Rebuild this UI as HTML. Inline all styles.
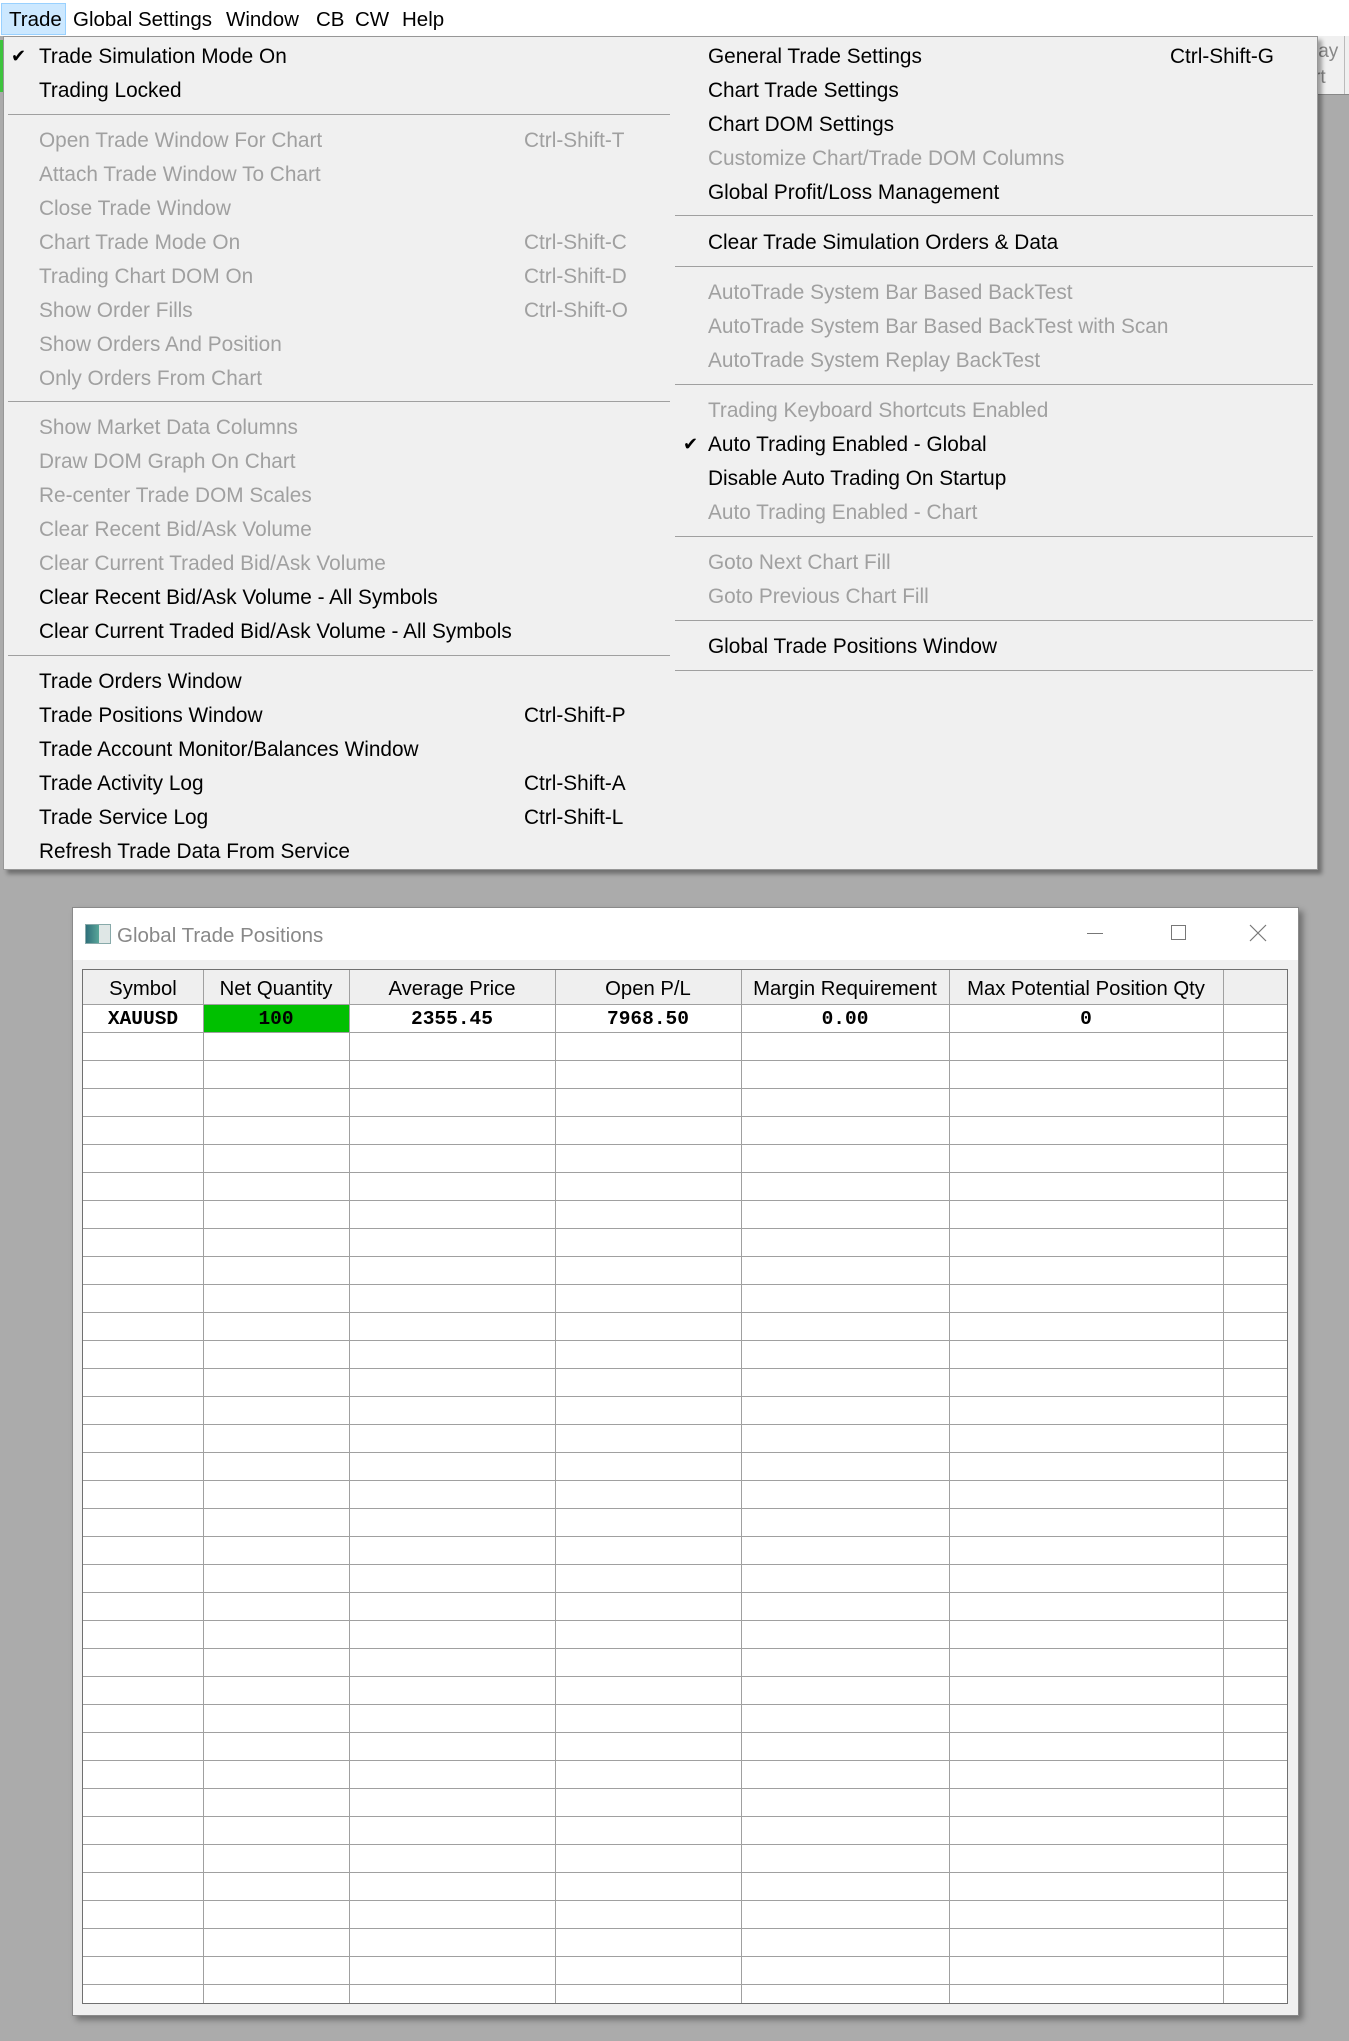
<!DOCTYPE html>
<html><head><meta charset="utf-8"><style>
*{margin:0;padding:0;box-sizing:border-box}
body{width:1349px;height:2041px;background:#ababab;position:relative;overflow:hidden;font-family:"Liberation Sans",sans-serif}
.bar{position:absolute;left:0;top:0;width:1349px;height:36px;background:#fff}
.mi{position:absolute;top:3px;height:32px;line-height:34px;font-size:20.5px;color:#000}
.menu{position:absolute;left:3px;top:36px;width:1315px;height:834px;background:#f0f0f0;border:1px solid #979797;box-shadow:4px 4px 4px rgba(0,0,0,.35)}
.it{position:absolute;height:34px;line-height:35px;font-size:20.8px;color:#000;white-space:nowrap}
.d{color:#a0a0a0}
.sep{position:absolute;height:1px;background:#a0a0a0}
.win{position:absolute;left:72px;top:907px;width:1227px;height:1109px;background:#f0f0f0;border:1px solid #8a8a8a;box-shadow:4px 4px 6px rgba(0,0,0,.35)}
.tb{position:absolute;left:0;top:0;width:100%;height:52px;background:#fff}
.grid{position:absolute;left:82px;top:969px;width:1206px;height:1035px;border:1px solid #707070;background:#fff}
.hd{position:absolute;left:0;top:0;width:100%;height:35px;background:#efefef;border-bottom:1px solid #a0a0a0}
.rows{position:absolute;left:0;top:35px;width:100%;bottom:0;background:repeating-linear-gradient(to bottom,transparent 0,transparent 27px,#a0a0a0 27px,#a0a0a0 28px)}
.vl{position:absolute;top:0;bottom:0;width:1px;background:#a0a0a0}
.h{position:absolute;top:0;height:35px;line-height:38px;font-size:20.3px;text-align:center;color:#000;white-space:nowrap}
.c{position:absolute;top:35px;height:27px;line-height:29px;font-family:"Liberation Mono",monospace;font-weight:bold;font-size:19.5px;text-align:center;color:#000}
</style></head><body>
<div class="bar">
<div style="position:absolute;left:1px;top:3px;width:65px;height:32px;background:#cce8ff;border:1px solid #99d1ff"></div>
<div class="mi" style="left:9px">Trade</div>
<div class="mi" style="left:73px">Global Settings</div>
<div class="mi" style="left:226px">Window</div>
<div class="mi" style="left:316px">CB</div>
<div class="mi" style="left:355px">CW</div>
<div class="mi" style="left:402px">Help</div>
</div>
<div style="position:absolute;left:0;top:40px;width:3px;height:52px;background:#3ec43e"></div>
<div style="position:absolute;left:1318px;top:36px;width:31px;height:59px;background:#f0f0f0;border-bottom:1px solid #888;font-size:19px;color:#888;line-height:26px;padding-top:3px;overflow:hidden"><div style="margin-left:-4px">lay</div><div style="margin-left:-4px">rt</div><div style="position:absolute;left:26px;top:0;width:1px;height:59px;background:#bbb"></div></div>

<div class="menu">
<div class="it" style="left:7px;top:2px;font-size:18px">✔</div>
<div class="it" style="left:35px;top:2px">Trade Simulation Mode On</div>
<div class="it" style="left:35px;top:36px">Trading Locked</div>
<div class="sep" style="left:4px;width:662px;top:77px"></div>
<div class="it d" style="left:35px;top:86px">Open Trade Window For Chart</div><div class="it d" style="left:520px;top:86px">Ctrl-Shift-T</div>
<div class="it d" style="left:35px;top:120px">Attach Trade Window To Chart</div>
<div class="it d" style="left:35px;top:154px">Close Trade Window</div>
<div class="it d" style="left:35px;top:188px">Chart Trade Mode On</div><div class="it d" style="left:520px;top:188px">Ctrl-Shift-C</div>
<div class="it d" style="left:35px;top:222px">Trading Chart DOM On</div><div class="it d" style="left:520px;top:222px">Ctrl-Shift-D</div>
<div class="it d" style="left:35px;top:256px">Show Order Fills</div><div class="it d" style="left:520px;top:256px">Ctrl-Shift-O</div>
<div class="it d" style="left:35px;top:290px">Show Orders And Position</div>
<div class="it d" style="left:35px;top:324px">Only Orders From Chart</div>
<div class="sep" style="left:4px;width:662px;top:364px"></div>
<div class="it d" style="left:35px;top:373px">Show Market Data Columns</div>
<div class="it d" style="left:35px;top:407px">Draw DOM Graph On Chart</div>
<div class="it d" style="left:35px;top:441px">Re-center Trade DOM Scales</div>
<div class="it d" style="left:35px;top:475px">Clear Recent Bid/Ask Volume</div>
<div class="it d" style="left:35px;top:509px">Clear Current Traded Bid/Ask Volume</div>
<div class="it" style="left:35px;top:543px">Clear Recent Bid/Ask Volume - All Symbols</div>
<div class="it" style="left:35px;top:577px">Clear Current Traded Bid/Ask Volume - All Symbols</div>
<div class="sep" style="left:4px;width:662px;top:618px"></div>
<div class="it" style="left:35px;top:627px">Trade Orders Window</div>
<div class="it" style="left:35px;top:661px">Trade Positions Window</div><div class="it" style="left:520px;top:661px">Ctrl-Shift-P</div>
<div class="it" style="left:35px;top:695px">Trade Account Monitor/Balances Window</div>
<div class="it" style="left:35px;top:729px">Trade Activity Log</div><div class="it" style="left:520px;top:729px">Ctrl-Shift-A</div>
<div class="it" style="left:35px;top:763px">Trade Service Log</div><div class="it" style="left:520px;top:763px">Ctrl-Shift-L</div>
<div class="it" style="left:35px;top:797px">Refresh Trade Data From Service</div>
<div class="it" style="left:704px;top:2px">General Trade Settings</div><div class="it" style="left:1166px;top:2px">Ctrl-Shift-G</div>
<div class="it" style="left:704px;top:36px">Chart Trade Settings</div>
<div class="it" style="left:704px;top:70px">Chart DOM Settings</div>
<div class="it d" style="left:704px;top:104px">Customize Chart/Trade DOM Columns</div>
<div class="it" style="left:704px;top:138px">Global Profit/Loss Management</div>
<div class="sep" style="left:671px;width:638px;top:178px"></div>
<div class="it" style="left:704px;top:188px">Clear Trade Simulation Orders &amp; Data</div>
<div class="sep" style="left:671px;width:638px;top:229px"></div>
<div class="it d" style="left:704px;top:238px">AutoTrade System Bar Based BackTest</div>
<div class="it d" style="left:704px;top:272px">AutoTrade System Bar Based BackTest with Scan</div>
<div class="it d" style="left:704px;top:306px">AutoTrade System Replay BackTest</div>
<div class="sep" style="left:671px;width:638px;top:347px"></div>
<div class="it d" style="left:704px;top:356px">Trading Keyboard Shortcuts Enabled</div>
<div class="it" style="left:679px;top:390px;font-size:18px">✔</div>
<div class="it" style="left:704px;top:390px">Auto Trading Enabled - Global</div>
<div class="it" style="left:704px;top:424px">Disable Auto Trading On Startup</div>
<div class="it d" style="left:704px;top:458px">Auto Trading Enabled - Chart</div>
<div class="sep" style="left:671px;width:638px;top:499px"></div>
<div class="it d" style="left:704px;top:508px">Goto Next Chart Fill</div>
<div class="it d" style="left:704px;top:542px">Goto Previous Chart Fill</div>
<div class="sep" style="left:671px;width:638px;top:583px"></div>
<div class="it" style="left:704px;top:592px">Global Trade Positions Window</div>
<div class="sep" style="left:671px;width:638px;top:633px"></div>
</div>

<div class="win">
<div class="tb">
<div style="position:absolute;left:12px;top:16px;width:26px;height:20px;background:linear-gradient(90deg,#2f6f7a 0,#5aa79a 55%,#dfe7e6 55%,#dfe7e6 100%);border:1px solid #8aa"></div>
<div style="position:absolute;left:44px;top:16px;font-size:20.5px;color:#888">Global Trade Positions</div>
<div style="position:absolute;left:1014px;top:25px;width:16px;height:1px;background:#777"></div>
<div style="position:absolute;left:1098px;top:17px;width:15px;height:15px;border:1px solid #777"></div>
<svg style="position:absolute;left:1176px;top:16px" width="18" height="18"><path d="M1 1L17 17M17 1L1 17" stroke="#777" stroke-width="1.2"/></svg>
</div>
</div>
<div class="grid">
<div class="hd"></div>
<div class="rows"></div>
<div style="position:absolute;left:120px;top:35px;width:146px;height:27px;background:#00c000"></div>
<div class="vl" style="left:120px"></div><div class="vl" style="left:266px"></div><div class="vl" style="left:472px"></div><div class="vl" style="left:658px"></div><div class="vl" style="left:866px"></div><div class="vl" style="left:1140px"></div>
<div class="h" style="left:0;width:120px">Symbol</div>
<div class="h" style="left:120px;width:146px">Net Quantity</div>
<div class="h" style="left:266px;width:206px">Average Price</div>
<div class="h" style="left:472px;width:186px">Open P/L</div>
<div class="h" style="left:658px;width:208px">Margin Requirement</div>
<div class="h" style="left:866px;width:274px">Max Potential Position Qty</div>
<div class="c" style="left:0;width:120px">XAUUSD</div>
<div class="c" style="left:120px;width:146px">100</div>
<div class="c" style="left:266px;width:206px">2355.45</div>
<div class="c" style="left:472px;width:186px">7968.50</div>
<div class="c" style="left:658px;width:208px">0.00</div>
<div class="c" style="left:866px;width:274px">0</div>
</div>
</body></html>
